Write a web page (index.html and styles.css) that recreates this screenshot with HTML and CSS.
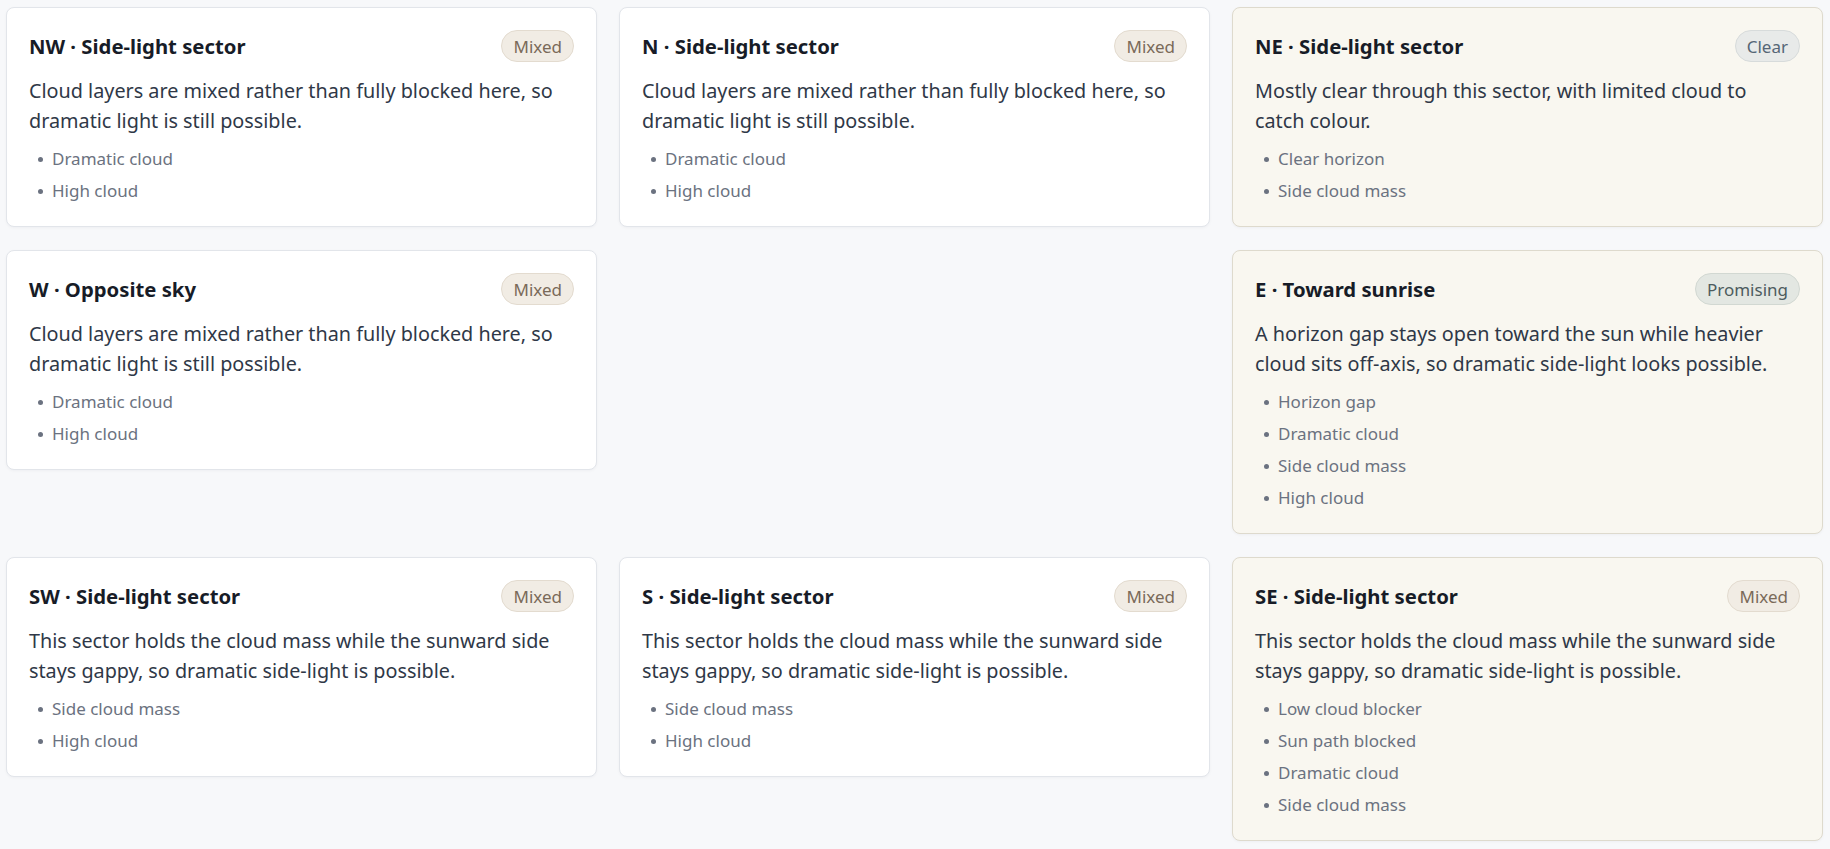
FILE: index.html
```html
<!DOCTYPE html>
<html lang="en">
<head>
<meta charset="utf-8">
<title>Sky sectors</title>
<link rel="stylesheet" href="styles.css">
</head>
<body>
<main class="grid">
  <article class="card">
    <header class="card-head"><h3 class="card-title">NW · Side-light sector</h3><span class="pill pill-mixed">Mixed</span></header>
    <p class="card-text">Cloud layers are mixed rather than fully blocked here, so dramatic light is still possible.</p>
    <ul class="tags"><li>Dramatic cloud</li><li>High cloud</li></ul>
  </article>
  <article class="card">
    <header class="card-head"><h3 class="card-title">N · Side-light sector</h3><span class="pill pill-mixed">Mixed</span></header>
    <p class="card-text">Cloud layers are mixed rather than fully blocked here, so dramatic light is still possible.</p>
    <ul class="tags"><li>Dramatic cloud</li><li>High cloud</li></ul>
  </article>
  <article class="card card-warm">
    <header class="card-head"><h3 class="card-title">NE · Side-light sector</h3><span class="pill pill-clear">Clear</span></header>
    <p class="card-text">Mostly clear through this sector, with limited cloud to catch colour.</p>
    <ul class="tags"><li>Clear horizon</li><li>Side cloud mass</li></ul>
  </article>

  <article class="card">
    <header class="card-head"><h3 class="card-title">W · Opposite sky</h3><span class="pill pill-mixed">Mixed</span></header>
    <p class="card-text">Cloud layers are mixed rather than fully blocked here, so dramatic light is still possible.</p>
    <ul class="tags"><li>Dramatic cloud</li><li>High cloud</li></ul>
  </article>
  <div class="cell-empty"></div>
  <article class="card card-warm">
    <header class="card-head"><h3 class="card-title">E · Toward sunrise</h3><span class="pill pill-promising">Promising</span></header>
    <p class="card-text">A horizon gap stays open toward the sun while heavier cloud sits off-axis, so dramatic side-light looks possible.</p>
    <ul class="tags"><li>Horizon gap</li><li>Dramatic cloud</li><li>Side cloud mass</li><li>High cloud</li></ul>
  </article>

  <article class="card">
    <header class="card-head"><h3 class="card-title">SW · Side-light sector</h3><span class="pill pill-mixed">Mixed</span></header>
    <p class="card-text">This sector holds the cloud mass while the sunward side stays gappy, so dramatic side-light is possible.</p>
    <ul class="tags"><li>Side cloud mass</li><li>High cloud</li></ul>
  </article>
  <article class="card">
    <header class="card-head"><h3 class="card-title">S · Side-light sector</h3><span class="pill pill-mixed">Mixed</span></header>
    <p class="card-text">This sector holds the cloud mass while the sunward side stays gappy, so dramatic side-light is possible.</p>
    <ul class="tags"><li>Side cloud mass</li><li>High cloud</li></ul>
  </article>
  <article class="card card-warm">
    <header class="card-head"><h3 class="card-title">SE · Side-light sector</h3><span class="pill pill-mixed">Mixed</span></header>
    <p class="card-text">This sector holds the cloud mass while the sunward side stays gappy, so dramatic side-light is possible.</p>
    <ul class="tags"><li>Low cloud blocker</li><li>Sun path blocked</li><li>Dramatic cloud</li><li>Side cloud mass</li></ul>
  </article>
</main>
</body>
</html>
```
FILE: styles.css
```css
* { box-sizing: border-box; }
html, body { margin: 0; padding: 0; }
body {
  background: #f7f8fa;
  font-family: "Noto Sans", "Open Sans", sans-serif;
  color: #2f3847;
}
.grid {
  display: grid;
  grid-template-columns: repeat(3, 591px);
  column-gap: 22px;
  row-gap: 23px;
  align-items: start;
  padding: 7px 6px;
}
.card {
  background: #ffffff;
  border: 1px solid #e2e5ea;
  border-radius: 8px;
  padding: 22px;
  box-shadow: 0 1px 3px rgba(20, 30, 50, 0.04);
}
.card-warm {
  background: #f9f7f0;
  border-color: #dedacd;
}
.card-head {
  display: flex;
  align-items: center;
  justify-content: space-between;
  height: 32px;
}
.card-title {
  margin: 0;
  font-size: 20.3px;
  font-weight: 700;
  color: #171c27;
  line-height: 28px;
}
.pill {
  display: inline-flex;
  align-items: center;
  height: 32px;
  padding: 0 11px;
  border-radius: 16px;
  border: 1px solid transparent;
  font-size: 17px;
  line-height: 1;
}
.pill-mixed {
  background: #f1ece4;
  border-color: #e3dbcf;
  color: #7a6a59;
}
.pill-clear {
  background: #e8eae9;
  border-color: #d7dbdb;
  color: #566676;
}
.pill-promising {
  background: #e3e7e2;
  border-color: #d2d8d2;
  color: #4d5c5e;
}
.card-text {
  margin: 14px 0 0;
  font-size: 19.8px;
  line-height: 30px;
  color: #2f3847;
}
.tags {
  list-style: none;
  margin: 10px 0 0;
  padding: 0;
  display: flex;
  flex-direction: column;
  gap: 6px;
}
.tags li {
  display: flex;
  align-items: center;
  gap: 9px;
  padding-left: 9px;
  font-size: 17px;
  line-height: 26px;
  color: #6b7280;
}
.tags li::before {
  content: "";
  width: 5px;
  height: 5px;
  border-radius: 50%;
  background: #6b7280;
  flex: none;
}
```
